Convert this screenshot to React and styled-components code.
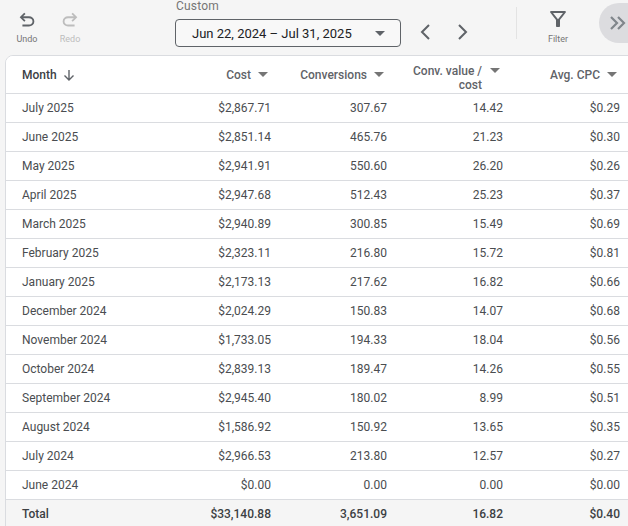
import React from 'react';
import styled, { createGlobalStyle } from 'styled-components';

const GlobalStyle = createGlobalStyle`
  html, body {
    margin: 0;
    height: 100%;
    overflow: hidden;
    background: #f5f5f5;
    font-family: Roboto, "Liberation Sans", sans-serif;
    color: #3c4043;
  }
`;

const Page = styled.div`
  width: 628px;
  height: 526px;
  overflow: hidden;
`;

const Toolbar = styled.div`
  display: flex;
  height: 55px;
  position: relative;
`;

const ToolButton = styled.div`
  width: ${(p) => p.$width}px;
  margin-left: ${(p) => p.$left}px;
  padding-top: ${(p) => p.$top}px;
  flex: none;
  display: flex;
  flex-direction: column;
  align-items: center;
  color: ${(p) => (p.$disabled ? '#bdbdbd' : '#5f6368')};
  svg {
    display: block;
    fill: currentColor;
  }
`;

const ToolLabel = styled.span`
  font-size: 9px;
  line-height: 10px;
  margin-top: 3px;
  color: ${(p) => (p.$disabled ? '#bdbdbd' : '#757575')};
`;

const DateGroup = styled.div`
  flex: none;
  width: 226px;
  margin-left: 85px;
`;

const DateLabel = styled.div`
  font-size: 12px;
  line-height: 12px;
  height: 19px;
  padding-left: 1px;
  letter-spacing: 0.2px;
  color: #757575;
`;

const DateBox = styled.div`
  box-sizing: border-box;
  height: 28px;
  border: 1px solid #5f6368;
  border-radius: 4px;
  background: #f8f8f8;
  display: flex;
  align-items: center;
  justify-content: space-between;
  padding: 0 15px 0 16px;
  font-size: 13px;
  color: #202124;
`;

const Caret = styled.span`
  display: inline-block;
  flex: none;
  width: 0;
  height: 0;
  border-left: 5px solid transparent;
  border-right: 5px solid transparent;
  border-top: 5px solid ${(p) => p.$color || '#757575'};
`;

const NavArrow = styled.svg`
  flex: none;
  width: 14px;
  height: 18px;
  margin-left: ${(p) => p.$left}px;
  margin-top: 23px;
  fill: none;
  stroke: #5f6368;
  stroke-width: 2;
`;

const Divider = styled.div`
  flex: none;
  width: 1px;
  height: 32px;
  margin-left: 46px;
  margin-top: 7px;
  background: #e3e3e3;
`;

const CollapseButton = styled.div`
  position: absolute;
  left: 599px;
  top: 3px;
  width: 48px;
  height: 40px;
  border-radius: 20px;
  background: #dcdcdf;
  color: #80868b;
  svg {
    display: block;
    margin: 11px 0 0 9px;
    fill: none;
    stroke: currentColor;
    stroke-width: 2.2;
  }
`;

const Card = styled.div`
  box-sizing: border-box;
  margin-left: 5px;
  width: 640px;
  height: 480px;
  background: #fff;
  border: 1px solid #dadce0;
  border-radius: 8px 8px 0 0;
  overflow: hidden;
`;

const Row = styled.div`
  box-sizing: border-box;
  display: grid;
  grid-template-columns: 133px 116px 116px 116px 117px;
  align-items: center;
  height: ${(p) => (p.$header ? 38 : p.$total ? 27 : 29)}px;
  padding-left: 16px;
  border-bottom: ${(p) => (p.$total ? 'none' : '1px solid #dadce0')};
  background: ${(p) => (p.$total ? '#f5f5f5' : '#fff')};
  font-size: 12px;
  font-weight: ${(p) => (p.$total ? 500 : 400)};
  color: ${(p) => (p.$total ? '#3c4043' : '#4a4d50')};
`;

const NameCell = styled.div`
  display: flex;
  align-items: center;
  white-space: nowrap;
`;

const ValueCell = styled.div`
  text-align: right;
  white-space: nowrap;
`;

const HeadName = styled.div`
  display: flex;
  align-items: center;
  font-weight: 500;
  color: #3c4043;
  svg {
    margin-left: 5px;
    fill: none;
    stroke: #5f6368;
    stroke-width: 1.4;
  }
`;

const HeadCell = styled.div`
  display: flex;
  justify-content: flex-end;
  align-items: ${(p) => (p.$wrap ? 'flex-start' : 'center')};
  gap: ${(p) => (p.$wrap ? 8 : 7)}px;
  padding-right: 3px;
  padding-top: ${(p) => (p.$wrap ? 6 : 0)}px;
  font-weight: 500;
  color: #5f6368;
`;

const HeadText = styled.span`
  line-height: 14px;
  text-align: right;
`;

const HeadCaret = styled(Caret)`
  margin-top: ${(p) => (p.$wrap ? '4px' : '0')};
`;

const rows = [
  ['July 2025', '$2,867.71', '307.67', '14.42', '$0.29'],
  ['June 2025', '$2,851.14', '465.76', '21.23', '$0.30'],
  ['May 2025', '$2,941.91', '550.60', '26.20', '$0.26'],
  ['April 2025', '$2,947.68', '512.43', '25.23', '$0.37'],
  ['March 2025', '$2,940.89', '300.85', '15.49', '$0.69'],
  ['February 2025', '$2,323.11', '216.80', '15.72', '$0.81'],
  ['January 2025', '$2,173.13', '217.62', '16.82', '$0.66'],
  ['December 2024', '$2,024.29', '150.83', '14.07', '$0.68'],
  ['November 2024', '$1,733.05', '194.33', '18.04', '$0.56'],
  ['October 2024', '$2,839.13', '189.47', '14.26', '$0.55'],
  ['September 2024', '$2,945.40', '180.02', '8.99', '$0.51'],
  ['August 2024', '$1,586.92', '150.92', '13.65', '$0.35'],
  ['July 2024', '$2,966.53', '213.80', '12.57', '$0.27'],
  ['June 2024', '$0.00', '0.00', '0.00', '$0.00'],
];

const undoPath =
  'M7 19v-2h7.1q1.575 0 2.738-1T18 13.5Q18 12 16.838 11T14.1 10H7.8l2.6 2.6L9 14 4 9l5-5 1.4 1.4L7.8 8h6.3q2.425 0 4.163 1.575T20 13.5q0 2.35-1.737 3.925T14.1 19H7Z';

const App = () => (
  <Page>
    <GlobalStyle />
    <Toolbar>
      <ToolButton $width={40} $left={7} $top={9}>
        <svg width="22" height="22" viewBox="0 0 24 24"><path d={undoPath} /></svg>
        <ToolLabel>Undo</ToolLabel>
      </ToolButton>
      <ToolButton $width={40} $left={3} $top={9} $disabled>
        <svg width="22" height="22" viewBox="0 0 24 24" style={{ transform: 'scaleX(-1)' }}><path d={undoPath} /></svg>
        <ToolLabel $disabled>Redo</ToolLabel>
      </ToolButton>
      <DateGroup>
        <DateLabel>Custom</DateLabel>
        <DateBox>
          Jun 22, 2024 – Jul 31, 2025
          <Caret $color="#5f6368" />
        </DateBox>
      </DateGroup>
      <NavArrow $left={17} viewBox="0 0 14 18"><path d="M11 2 4 9l7 7" /></NavArrow>
      <NavArrow $left={24} viewBox="0 0 14 18"><path d="m3 2 7 7-7 7" /></NavArrow>
      <Divider />
      <ToolButton $width={40} $left={21} $top={7}>
        <svg width="24" height="24" viewBox="0 0 24 24"><path d="M7 6h10l-5.01 6.3L7 6zm-2.75-.39C6.27 8.2 10 13 10 13v6c0 .55.45 1 1 1h2c.55 0 1-.45 1-1v-6s3.73-4.8 5.75-7.39C20.26 4.95 19.79 4 18.96 4H5.04c-.83 0-1.3.95-.79 1.61z" /></svg>
        <ToolLabel>Filter</ToolLabel>
      </ToolButton>
      <CollapseButton>
        <svg width="18" height="18" viewBox="0 0 18 18"><path d="m3 3 6 6-6 6M10 3l6 6-6 6" /></svg>
      </CollapseButton>
    </Toolbar>
    <Card>
      <Row $header>
        <HeadName>
          Month
          <svg width="14" height="14" viewBox="0 0 14 14"><path d="M7 2v10M2.5 7.5 7 12l4.5-4.5" /></svg>
        </HeadName>
        <HeadCell>
          <HeadText>Cost</HeadText>
          <HeadCaret />
        </HeadCell>
        <HeadCell>
          <HeadText>Conversions</HeadText>
          <HeadCaret />
        </HeadCell>
        <HeadCell $wrap>
          <HeadText>Conv. value /<br />cost</HeadText>
          <HeadCaret $wrap />
        </HeadCell>
        <HeadCell>
          <HeadText>Avg. CPC</HeadText>
          <HeadCaret />
        </HeadCell>
      </Row>
      {rows.map(([month, cost, conv, value, cpc]) => (
        <Row key={month}>
          <NameCell>{month}</NameCell>
          <ValueCell>{cost}</ValueCell>
          <ValueCell>{conv}</ValueCell>
          <ValueCell>{value}</ValueCell>
          <ValueCell>{cpc}</ValueCell>
        </Row>
      ))}
      <Row $total>
        <NameCell>Total</NameCell>
        <ValueCell>$33,140.88</ValueCell>
        <ValueCell>3,651.09</ValueCell>
        <ValueCell>16.82</ValueCell>
        <ValueCell>$0.40</ValueCell>
      </Row>
    </Card>
  </Page>
);

export default App;
